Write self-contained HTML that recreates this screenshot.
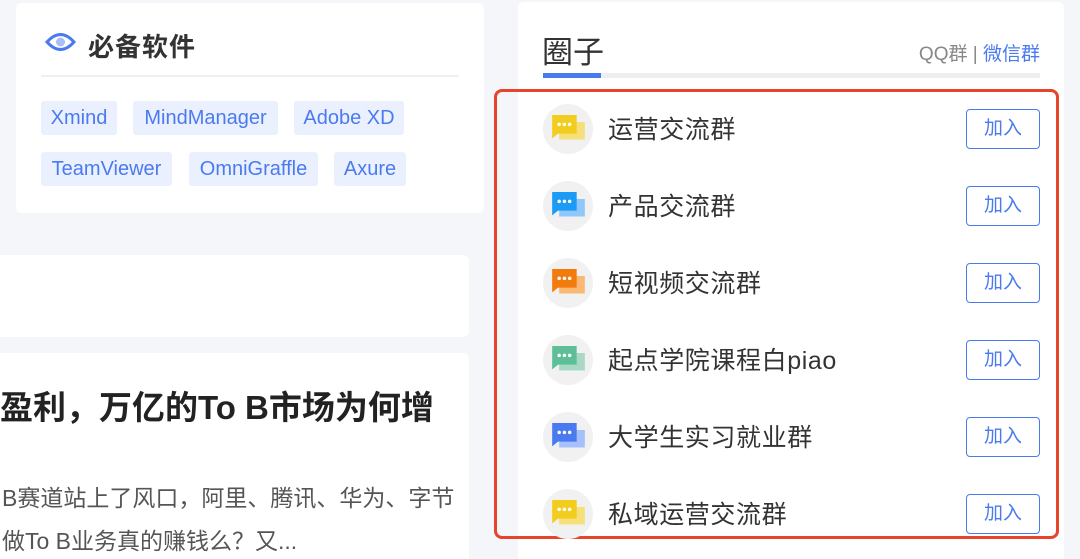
<!DOCTYPE html>
<html><head><meta charset="utf-8"><style>
*{margin:0;padding:0;box-sizing:border-box}
html,body{width:1080px;height:559px;overflow:hidden}
body{background:#f5f6fa;position:relative;font-family:"Liberation Sans","Noto Sans CJK SC",sans-serif}
.card{position:absolute;background:#fff;border-radius:6px}
.tag{position:absolute;height:34px;line-height:34px;background:#ebf0fe;color:#4a7af0;font-size:20px;border-radius:3px;text-align:center;white-space:nowrap}
.row{position:absolute;left:543px;width:497px;height:50px}
.ic{position:absolute;left:0;top:0;width:50px;height:50px;border-radius:50%;background:#f1f1f1}
.ic svg{position:absolute;left:9px;top:11px}
.row .t{position:absolute;left:65px;top:9px;font-size:25px;color:#333;line-height:34px;letter-spacing:0.6px;white-space:nowrap}
.btn{position:absolute;right:0;top:5px;width:74px;height:40px;border:1.5px solid #4a7af0;border-radius:4px;color:#4a7af0;font-size:19px;text-align:center;line-height:37px}
</style></head><body>
<div class="card" style="left:16px;top:3px;width:468px;height:210px"></div>
<svg style="position:absolute;left:45px;top:31px" width="31" height="22" viewBox="0 0 31 22"><path d="M2 11 Q15.5 -4 29 11 Q15.5 26 2 11Z" fill="none" stroke="#4a7af0" stroke-width="3"/><circle cx="15.5" cy="11" r="4.5" fill="#a9c0f7"/></svg>
<div style="position:absolute;left:88px;top:27px;font-size:26px;font-weight:bold;color:#333;letter-spacing:1px">必备软件</div>
<div style="position:absolute;left:41px;top:75px;width:418px;height:2px;background:#f0f0f0"></div>
<div class="tag" style="left:41px;top:101px;width:76px">Xmind</div>
<div class="tag" style="left:133px;top:101px;width:145px">MindManager</div>
<div class="tag" style="left:294px;top:101px;width:110px">Adobe XD</div>
<div class="tag" style="left:41px;top:152px;width:131px">TeamViewer</div>
<div class="tag" style="left:189px;top:152px;width:129px">OmniGraffle</div>
<div class="tag" style="left:334px;top:152px;width:72px">Axure</div>
<div class="card" style="left:-10px;top:255px;width:479px;height:82px"></div>
<div class="card" style="left:-10px;top:353px;width:479px;height:206px;border-bottom-left-radius:0;border-bottom-right-radius:0"></div>
<div style="position:absolute;left:0;top:381px;font-size:33px;font-weight:bold;color:#222;white-space:nowrap">盈利，万亿的To B市场为何增</div>
<div style="position:absolute;left:2px;top:477px;font-size:23px;color:#555;line-height:43px;white-space:nowrap">B赛道站上了风口，阿里、腾讯、华为、字节<br>做To B业务真的赚钱么？又...</div>
<div class="card" style="left:518px;top:2px;width:546px;height:557px;border-bottom-left-radius:0;border-bottom-right-radius:0"></div>
<div style="position:absolute;left:542px;top:27px;font-size:31px;color:#333">圈子</div>
<div style="position:absolute;right:40px;top:39px;font-size:19px;color:#888">QQ群 | <span style="color:#4a7af0">微信群</span></div>
<div style="position:absolute;left:543px;top:73px;width:497px;height:5px;background:#eee"></div>
<div style="position:absolute;left:543px;top:73px;width:58px;height:5px;background:#4a7af0"></div>
<div style="position:absolute;left:494px;top:89px;width:565px;height:450px;border:3px solid #e8432b;border-radius:8px"></div>

<div class="row" style="top:104px"><div class="ic"><svg width="33" height="28" viewBox="0 0 28 24"><rect x="6" y="6" width="22" height="15" fill="#f5e07a"/><path d="M0 0H21V16H5L0 20Z" fill="#f2cd1d"/><circle cx="6" cy="8" r="1.5" fill="#fff"/><circle cx="10.5" cy="8" r="1.5" fill="#fff"/><circle cx="15" cy="8" r="1.5" fill="#fff"/></svg></div><div class="t">运营交流群</div><div class="btn">加入</div></div>
<div class="row" style="top:181px"><div class="ic"><svg width="33" height="28" viewBox="0 0 28 24"><rect x="6" y="6" width="22" height="15" fill="#8fc8f8"/><path d="M0 0H21V16H5L0 20Z" fill="#1b9af6"/><circle cx="6" cy="8" r="1.5" fill="#fff"/><circle cx="10.5" cy="8" r="1.5" fill="#fff"/><circle cx="15" cy="8" r="1.5" fill="#fff"/></svg></div><div class="t">产品交流群</div><div class="btn">加入</div></div>
<div class="row" style="top:258px"><div class="ic"><svg width="33" height="28" viewBox="0 0 28 24"><rect x="6" y="6" width="22" height="15" fill="#f9b873"/><path d="M0 0H21V16H5L0 20Z" fill="#f27b0d"/><circle cx="6" cy="8" r="1.5" fill="#fff"/><circle cx="10.5" cy="8" r="1.5" fill="#fff"/><circle cx="15" cy="8" r="1.5" fill="#fff"/></svg></div><div class="t">短视频交流群</div><div class="btn">加入</div></div>
<div class="row" style="top:335px"><div class="ic"><svg width="33" height="28" viewBox="0 0 28 24"><rect x="6" y="6" width="22" height="15" fill="#a9d9c4"/><path d="M0 0H21V16H5L0 20Z" fill="#5dbf97"/><circle cx="6" cy="8" r="1.5" fill="#fff"/><circle cx="10.5" cy="8" r="1.5" fill="#fff"/><circle cx="15" cy="8" r="1.5" fill="#fff"/></svg></div><div class="t">起点学院课程白piao</div><div class="btn">加入</div></div>
<div class="row" style="top:412px"><div class="ic"><svg width="33" height="28" viewBox="0 0 28 24"><rect x="6" y="6" width="22" height="15" fill="#a6c0fb"/><path d="M0 0H21V16H5L0 20Z" fill="#4a7af0"/><circle cx="6" cy="8" r="1.5" fill="#fff"/><circle cx="10.5" cy="8" r="1.5" fill="#fff"/><circle cx="15" cy="8" r="1.5" fill="#fff"/></svg></div><div class="t">大学生实习就业群</div><div class="btn">加入</div></div>
<div class="row" style="top:489px"><div class="ic"><svg width="33" height="28" viewBox="0 0 28 24"><rect x="6" y="6" width="22" height="15" fill="#f5e07a"/><path d="M0 0H21V16H5L0 20Z" fill="#f2cd1d"/><circle cx="6" cy="8" r="1.5" fill="#fff"/><circle cx="10.5" cy="8" r="1.5" fill="#fff"/><circle cx="15" cy="8" r="1.5" fill="#fff"/></svg></div><div class="t">私域运营交流群</div><div class="btn">加入</div></div>
</body></html>
